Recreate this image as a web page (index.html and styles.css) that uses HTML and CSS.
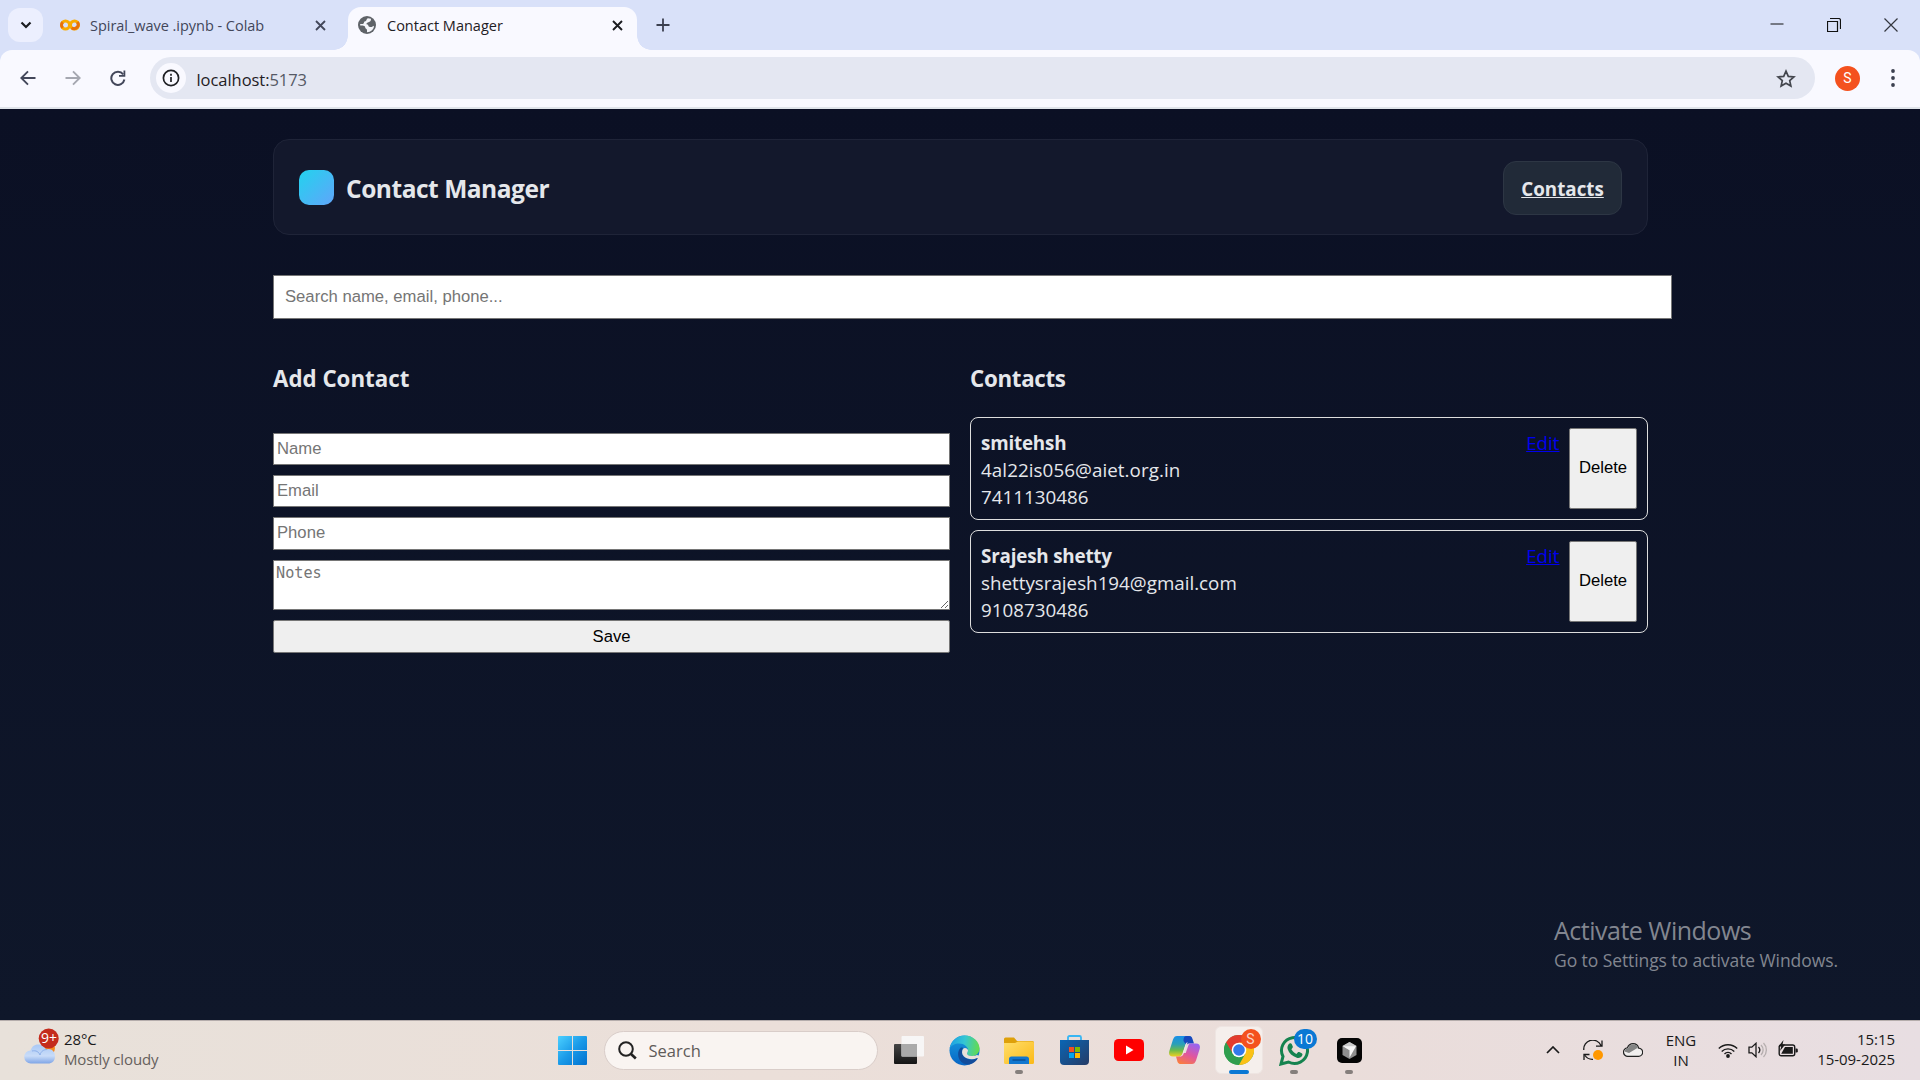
FILE: index.html
```html
<!DOCTYPE html>
<html lang="en">
<head>
<meta charset="utf-8">
<title>Contact Manager</title>
<link rel="stylesheet" href="styles.css">
</head>
<body>
<div class="tabstrip">
  <div class="tab-search"><svg width="12" height="8" viewBox="0 0 12 8"><path d="M1.5 1.5 6 6l4.500-4.500" fill="none" stroke="#1b1c20" stroke-width="2.200"/></svg></div>
  <div class="tab idle">
    <svg class="colab" width="20" height="14" viewBox="0 0 20 14"><circle cx="5.500" cy="7" r="4" fill="none" stroke="#f9ab00" stroke-width="3"/><circle cx="14.500" cy="7" r="4" fill="none" stroke="#f9ab00" stroke-width="3"/><path d="M2.700 4.200A4 4 0 0 0 2.700 9.800M11.700 9.800a4 4 0 0 0 5.600-5.600" fill="none" stroke="#e8710a" stroke-width="3"/></svg>
    <span class="tab-title t-colab">Spiral_wave .ipynb - Colab</span>
    <svg class="close" width="11" height="11" viewBox="0 0 11 11"><path d="M1 1l9 9M10 1l-9 9" stroke="#43475a" stroke-width="1.800"/></svg>
  </div>
  <div class="tab active">
    <svg class="globe" width="18" height="18" viewBox="0 0 18 18"><circle cx="9" cy="9" r="9" fill="#5f6368"/><path d="M10 2.200C8 3 9 5 7 5.300 5.500 5.500 6.500 7.500 5 8H2.200v1.500c2 0 5 0 5 2 0 1.500 1.800 1 1.800 2.500v2.200c4 0 7-3 7-6.500-1.500.5-2 1.800-4 1.300-2.500-.5-1-2.500-3-2.500-1.500-1 .5-2 2-2.500s2-1.500 2-3.300z" fill="#f4f5fa"/></svg>
    <span class="tab-title t-cm">Contact Manager</span>
    <svg class="close" width="11" height="11" viewBox="0 0 11 11"><path d="M1 1l9 9M10 1l-9 9" stroke="#1b1c20" stroke-width="1.900"/></svg>
  </div>
  <svg class="plus" width="14" height="14" viewBox="0 0 14 14"><path d="M7 .5v13M.5 7h13" stroke="#3c4050" stroke-width="1.800"/></svg>
  <div class="win-controls">
    <svg width="14" height="14" viewBox="0 0 14 14"><path d="M.5 6h13" stroke="#111"/></svg>
    <svg width="14" height="14" viewBox="0 0 14 14"><path d="M.5 3.500h10v10H.5zM3 .5h8.500a2 2 0 0 1 2 2V11" fill="none" stroke="#111" stroke-width="1.200"/></svg>
    <svg width="14" height="14" viewBox="0 0 14 14"><path d="M.5.5l13 13M13.500.5l-13 13" stroke="#33363f" stroke-width="1.200"/></svg>
  </div>
</div>
<div class="toolbar">
  <svg class="nav-ic" width="16" height="16" viewBox="0 0 16 16"><path d="M15.500 8H1.500M8 1.300 1.300 8 8 14.700" fill="none" stroke="#43475a" stroke-width="1.900"/></svg>
  <svg class="nav-ic" width="16" height="16" viewBox="0 0 16 16"><path d="M.5 8h14M8 1.300 14.700 8 8 14.700" fill="none" stroke="#a5a7b0" stroke-width="1.900"/></svg>
  <svg class="nav-ic" width="16" height="16" viewBox="0 0 16 16"><path d="M13.200 4.300A6.600 6.600 0 1 0 14.400 9.500" fill="none" stroke="#43475a" stroke-width="2"/><path d="M15.300.5v6.300H9V5h4.500V.5z" fill="#43475a"/></svg>
  <div class="omnibox">
    <span class="info"><svg width="18" height="18" viewBox="0 0 18 18"><circle cx="9" cy="9" r="7.600" fill="none" stroke="#1f2024" stroke-width="1.700"/><path d="M9 8v5M9 4.800v1.900" stroke="#1f2024" stroke-width="1.700"/></svg></span>
    <span class="url">localhost:<i>5173</i></span>
    <svg class="star" width="20" height="19" viewBox="0 0 20 19"><path d="M10 2.200l2.300 5.200 5.600.5-4.200 3.700 1.200 5.500L10 14.200l-4.900 2.900 1.200-5.500L2.100 7.900l5.600-.5z" fill="none" stroke="#43464d" stroke-width="1.700"/></svg>
  </div>
  <span class="avatar">S</span>
  <svg class="menu" width="4" height="18" viewBox="0 0 4 18"><circle cx="2" cy="2" r="1.900" fill="#3c4050"/><circle cx="2" cy="9" r="1.900" fill="#3c4050"/><circle cx="2" cy="16" r="1.900" fill="#3c4050"/></svg>
</div>
<main class="page">
  <header class="app-header">
    <span class="logo"></span>
    <h1>Contact Manager</h1>
    <a class="nav-link" href="#"><span>Contacts</span></a>
  </header>
  <input class="search" placeholder="Search name, email, phone...">
  <div class="columns">
    <section>
      <h2>Add Contact</h2>
      <form class="form">
        <input placeholder="Name">
        <input placeholder="Email">
        <input class="tall" placeholder="Phone">
        <textarea placeholder="Notes"></textarea>
        <button type="button">Save</button>
      </form>
    </section>
    <section>
      <h2 class="h-list">Contacts</h2>
      <div class="list">
        <article class="card">
          <div class="who"><strong>smitehsh</strong><span class="mail-a">4al22is056@aiet.org.in</span><span>7411130486</span></div>
          <a href="#">Edit</a><button type="button">Delete</button>
        </article>
        <article class="card">
          <div class="who"><strong>Srajesh shetty</strong><span>shettysrajesh194@gmail.com</span><span>9108730486</span></div>
          <a href="#">Edit</a><button type="button">Delete</button>
        </article>
      </div>
    </section>
  </div>
  <div class="watermark"><div class="w1">Activate Windows</div><div class="w2">Go to Settings to activate Windows.</div></div>
</main>
<footer class="taskbar">
  <div class="weather">
    <svg width="36" height="38" viewBox="0 0 36 38"><defs><linearGradient id="cl" x2="0" y2="1"><stop offset="0" stop-color="#a9c8f5"/><stop offset=".6" stop-color="#c9dcf8"/><stop offset="1" stop-color="#7fa5e6"/></linearGradient></defs><circle cx="24" cy="20" r="7" fill="#f58a1f"/><path d="M7 35.500a6.500 6.500 0 0 1-.5-13C8 18 11 16.500 14.500 16.500c4 0 6 2 7.500 5 4-2 9 1 9 6.500s-3 7.500-7 7.500z" fill="url(#cl)"/><path d="M8 23c4-1 7 1 8 4 1-4 4-5.500 7-5.500" fill="none" stroke="#8db0ea"/><circle cx="24.700" cy="10.500" r="10" fill="#c42b1c"/></svg>
    <b class="nine">9+</b>
    <div class="wtext"><div class="deg">28°C</div><div class="cloudy">Mostly cloudy</div></div>
  </div>
  <div class="apps">
    <div class="cell"><svg width="29" height="29" viewBox="0 0 29 29"><defs><linearGradient id="wn" gradientUnits="userSpaceOnUse" x1="0" y1="0" x2="29" y2="29"><stop offset="0" stop-color="#4cd0ff"/><stop offset=".5" stop-color="#1a9ae8"/><stop offset="1" stop-color="#0070cf"/></linearGradient></defs><path d="M1 0h13v14H0V1a1 1 0 0 1 1-1zM15 0h13a1 1 0 0 1 1 1v13H15zM0 15h14v14H1a1 1 0 0 1-1-1zM15 15h14v13a1 1 0 0 1-1 1H15z" fill="url(#wn)"/></svg></div>
    <div class="tsearch"><svg width="19" height="19" viewBox="0 0 19 19"><circle cx="8" cy="8" r="6.800" fill="none" stroke="#222" stroke-width="2"/><path d="M12.500 12.500l5.300 5" stroke="#222" stroke-width="2.600"/></svg><span>Search</span></div>
    <div class="cell"><svg width="30" height="28" viewBox="0 0 30 28"><defs><linearGradient id="tv" x2="0" y2="1"><stop offset="0" stop-color="#454545"/><stop offset="1" stop-color="#151515"/></linearGradient></defs><rect y="8" width="23" height="20" rx="1" fill="url(#tv)"/><rect x="7.500" width="22.500" height="20.500" rx="1" fill="#f7f7f7" opacity=".93"/><path d="M7.500 8H23v12.500H7.500z" fill="#aaa"/></svg></div>
    <div class="cell"><svg width="31" height="31" viewBox="0 0 31 31"><defs><linearGradient id="e1" x1="0" y1=".3" x2="1" y2=".4"><stop offset="0" stop-color="#1c9fe4"/><stop offset=".5" stop-color="#35c6d3"/><stop offset="1" stop-color="#63db4f"/></linearGradient><linearGradient id="e2" x2="0" y2="1"><stop offset="0" stop-color="#189cdf"/><stop offset="1" stop-color="#0865c4"/></linearGradient></defs><circle cx="15.500" cy="15.500" r="15" fill="url(#e2)"/><path d="M.6 13.500C2 5.500 8.500.5 15.500.5c9 0 15 6.500 15 13 0 5-4 7.500-7.500 7.500-3.500 0-5-1.500-5-2.500 0-.8 1-1.500 1-3.500 0-3-3.500-6.500-9-6.500-4 0-8 2-9.400 5z" fill="url(#e1)"/><path d="M11.500 13c-4 4-3 12 3 15.500 5.500 3 11.500-.5 14-4.700.3-.7-.3-1-1-.6-6 3-13.500.3-14.300-5-.3-2 .3-4 .8-5.200-.8-.6-1.700-.6-2.500 0z" fill="#124c9b"/><path d="M14 14c-1.500 2-1.300 5.500 1 7.500 3.500 3 9 3.500 13 1.500l1.200.1 1.800-2-3-1c-1 .6-3 1-5 .9-3.500 0-5-1.500-5-2.500 0-.8 1-1.500 1-3.500-1-2-3.500-3-5-1z" fill="#eadfd9"/></svg></div>
    <div class="cell"><svg width="30" height="27" viewBox="0 0 30 27"><defs><linearGradient id="fo" x2="1" y2="1"><stop offset="0" stop-color="#ffde6b"/><stop offset="1" stop-color="#fbb917"/></linearGradient></defs><path d="M0 2a1.500 1.500 0 0 1 1.500-1.500H10L13 4h15.500A1.500 1.500 0 0 1 30 5.500V12H0z" fill="#dea00a"/><path d="M0 6h11l3-1.500h14.500A1.500 1.500 0 0 1 30 6v19.500a1.500 1.500 0 0 1-1.500 1.500h-27A1.500 1.500 0 0 1 0 25.500z" fill="url(#fo)"/><path d="M5 27v-5a2.500 2.500 0 0 1 2.500-2.500h15A2.500 2.500 0 0 1 25 22v5z" fill="#1277cf"/><path d="M8.500 23h13" stroke="#0b4f96" stroke-width="1.500"/></svg><u></u></div>
    <div class="cell"><svg width="29" height="30" viewBox="0 0 29 30"><defs><linearGradient id="st" x2="1" y2="1"><stop offset="0" stop-color="#0a66b5"/><stop offset="1" stop-color="#253b66"/></linearGradient></defs><path d="M8 6V2.500A1.500 1.500 0 0 1 9.500 1h10A1.500 1.500 0 0 1 21 2.500V6" fill="none" stroke="#38b6f3" stroke-width="1.800"/><path d="M0 5h29v21a4 4 0 0 1-4 4H4a4 4 0 0 1-4-4z" fill="url(#st)"/><path d="M9 12h5v5H9z" fill="#f25022"/><path d="M15 12h5v5h-5z" fill="#7fba00"/><path d="M9 18h5v5H9z" fill="#00a4ef"/><path d="M15 18h5v5h-5z" fill="#ffb900"/></svg></div>
    <div class="cell"><svg width="30" height="22" viewBox="0 0 30 22"><rect width="30" height="22" rx="4.500" fill="#f00"/><path d="M12 6.500v9l7.500-4.500z" fill="#fff"/></svg></div>
    <div class="cell"><svg width="31" height="28" viewBox="0 0 31 28"><defs><linearGradient id="c1" x2="0" y2="1"><stop offset="0" stop-color="#1a8fe8"/><stop offset=".4" stop-color="#2a9fb8"/><stop offset=".7" stop-color="#6cbb4a"/><stop offset="1" stop-color="#f0d020"/></linearGradient><linearGradient id="c2" x1=".7" y1="0" x2=".2" y2="1"><stop offset="0" stop-color="#9a63ee"/><stop offset=".5" stop-color="#e0569f"/><stop offset="1" stop-color="#fb7e3c"/></linearGradient></defs><path d="M8 0h12c2 0 2.500 1 3 3l.5 2H20c-2 0-2.800 1-3.300 3l-3 9c-.8 2.500-1.700 3.500-4.200 3.500H4c-4 0-4.500-3-3.500-6L4 3.500C5 1 6 0 8 0z" fill="url(#c1)"/><path d="M17 0h3c2 0 3 1 3.500 3l1.500 4.500h-4c-2 0-3 .5-3.500 2L14.500 5c0-2 .500-5 2.500-5z" fill="#1848bd"/><path d="M23 28H12c-3 0-3.500-2-4-4l-1-3.500h2.500c2.500 0 3.400-1 4.200-3.500h3l3-8.500c.500-1 1.500-1 3-1H27c4 0 4.500 3 3.500 6L27 24.500c-1 2.500-2 3.500-4 3.500z" fill="url(#c2)"/><path d="M16.700 8c.5-1 1-1.500 2-1.700L14.500 18c-.8 2-2 2.500-4 2.500 2-.5 2.500-1.500 3.200-3.500z" fill="#f1e6e4"/></svg></div>
    <div class="cell"><div class="tile"></div><svg width="30" height="30" viewBox="0 0 30 30"><circle cx="15" cy="15" r="15" fill="#34a853"/><path d="M2 7.500A15 15 0 0 1 28 7.500L15 15z" fill="#e33b2e"/><path d="M2 7.500 8.900 18.800 15 15V7.500z" fill="#e33b2e"/><path d="M2 7.500A15 15 0 0 0 15 30l6.300-11.300H8.500z" fill="#2f9e4e"/><path d="M28 7.500A15 15 0 0 1 15 30l6.300-11.300L15 7.500z" fill="#fbc116"/><circle cx="15" cy="15" r="7.300" fill="#fff"/><circle cx="15" cy="15" r="5.800" fill="#3279ea"/></svg><span class="badge orange">S</span><u class="on"></u></div>
    <div class="cell"><svg width="31" height="31" viewBox="0 0 31 31"><path d="M2 29l2-7.500A13 13 0 1 1 9.500 27z" fill="none" stroke="#15834f" stroke-width="3"/><path d="M10.500 8.500c.8-.5 1.800-.3 2.200.6l1.100 2.500c.2.600 0 1-.4 1.500l-1 1.200c1.300 2.300 2.700 3.600 5 4.700l1.300-1.500c.4-.5.900-.6 1.500-.4l2.500 1.200c.8.500.9 1 .6 2-.8 2.300-3.500 3-5.500 2.400-4.500-1.400-7.800-4.500-9.200-8.700-.5-2 .2-4.400 1.900-5.500z" fill="#15834f"/></svg><span class="badge blue">10</span><u></u></div>
    <div class="cell"><svg width="25" height="25" viewBox="0 0 25 25"><rect width="25" height="25" rx="5" fill="#050505"/><path d="M12.500 4l7 4v9l-7 4-7-4V8z" fill="#8e8e8e"/><path d="M12.500 4l7 4-7 4-7-4z" fill="#c9c9c9"/><path d="M6 8.300h13l-6.500 11.500v-7.500z" fill="#f5f5f5"/></svg><u></u></div>
  </div>
  <div class="tray">
    <svg class="i-chev" width="14" height="8" viewBox="0 0 14 8"><path d="M1 7l6-6 6 6" fill="none" stroke="#1a1a1a" stroke-width="1.700"/></svg>
    <svg class="i-sync" width="20" height="20" viewBox="0 0 20 20"><path d="M.8 10A9 9 0 0 1 18 5.500M19 .5v5.700h-6M1 20v-5.500h5.500M2 15.500C4 18.500 7 19.500 10 19.300" fill="none" stroke="#1a1a1a" stroke-width="1.300"/><circle cx="15" cy="15" r="5" fill="#ff9800"/></svg>
    <svg class="i-cloud" width="20" height="14" viewBox="0 0 20 14"><path d="M5 13.300a4.200 4.200 0 0 1-.6-8.400C5.500 2 7.500.7 10 .7c3 0 5 1.800 5.700 4.500a4 4 0 0 1-.2 8.100z" fill="#f1efee" stroke="#222" stroke-width="1.200"/><path d="M1.500 8.500C2 6 3.500 5.500 5 5.300 6 2.500 8 1.300 10 1.300c2.500 0 4.300 1.500 5 3.900-1.500 0-2.500.6-3.500 1.500L6 10z" fill="#848484"/></svg>
    <div class="lang"><div>ENG</div><div>IN</div></div>
    <svg class="i-wifi" width="20" height="15" viewBox="0 0 20 15"><path d="M.8 5.500a13 13 0 0 1 18.400 0M3.700 8.400a9 9 0 0 1 12.600 0M6.500 11a5 5 0 0 1 7 0" fill="none" stroke="#1a1a1a" stroke-width="1.400"/><circle cx="10" cy="13" r="1.900" fill="#1a1a1a"/></svg>
    <svg class="i-snd" width="20" height="16" viewBox="0 0 20 16"><path d="M1 5.200h2.800L8 1.300v13.400l-4.200-3.900H1z" fill="none" stroke="#1a1a1a" stroke-width="1.300"/><path d="M10.500 5a4.500 4.500 0 0 1 0 6" fill="none" stroke="#1a1a1a" stroke-width="1.300"/><path d="M13 3a7 7 0 0 1 0 10M15.500 1a10 10 0 0 1 0 14" fill="none" stroke="#b5aeae" stroke-width="1.300"/></svg>
    <svg class="i-bat" width="20" height="17" viewBox="0 0 20 17"><rect x="1.200" y="5" width="15.500" height="10.800" rx="2" fill="none" stroke="#1a1a1a" stroke-width="1.400"/><path d="M17.500 8.500h1a1.300 1.300 0 0 1 1.300 1.300v1.400a1.300 1.300 0 0 1-1.300 1.300h-1z" fill="#1a1a1a"/><path d="M7 7h7.800v6.700H3.200z" fill="#1a1a1a"/><path d="M5.500 0 .5 6.500h2.700L2 11l5.200-6.500H4.500z" fill="#1a1a1a"/></svg>
    <div class="clock"><div class="tm">15:15</div><div class="dt">15-09-2025</div></div>
  </div>
</footer>
</body>
</html>
```
FILE: styles.css
```css
* { box-sizing: border-box; }
body { margin: 0; width: 1920px; height: 1080px; overflow: hidden; display: flex; flex-direction: column; font-family: "Open Sans", "Noto Sans", sans-serif; background: #d9e1f9; }
svg { display: block; flex: none; }
h1, h2 { margin: 0; }

/* Browser tabs */
.tabstrip { height: 50px; display: flex; align-items: flex-start; padding: 7px 22px 0 8px; background: #d9e1f9; }
.tab-search { width: 35px; height: 34px; margin-top: 1px; border-radius: 12px; background: #eceffe; display: grid; place-items: center; }
.tab { height: 43px; display: flex; align-items: center; padding-bottom: 7px; color: #42465a; position: relative; }
.tab.idle { width: 305px; padding-left: 17px; }
.tab.active { width: 289px; padding-left: 10px; background: #f9f9ff; border-radius: 13px 13px 0 0; color: #1f2024; }
.tab.active::before, .tab.active::after { content: ""; position: absolute; bottom: 0; width: 14px; height: 14px; }
.tab.active::before { left: -14px; background: radial-gradient(circle at 0 0, transparent 13.500px, #f9f9ff 14px); }
.tab.active::after { right: -14px; background: radial-gradient(circle at 100% 0, transparent 13.500px, #f9f9ff 14px); }
.tab-title { font-size: 14.500px; white-space: nowrap; margin-left: 10px; }
.t-colab { letter-spacing: -.03px; }
.t-cm { margin-left: 11px; }
.tab .close { margin-left: auto; margin-right: 22px; }
.tab.active .close { margin-right: 14px; }
.plus { margin: 11px 0 0 19px; }
.win-controls { margin-left: auto; display: flex; gap: 43px; margin-top: 10.500px; }

/* Browser toolbar */
.toolbar { height: 59px; display: flex; align-items: center; padding: 0 25px 1px 20px; background: #f9f9ff; border-bottom: 2px solid #e0e4ea; border-radius: 12px 12px 0 0; }
.nav-ic { margin-right: 29px; }
.nav-ic:nth-child(3) { margin-right: 24px; }
.omnibox { width: 1665px; height: 42px; border-radius: 21px; background: #e4e7f2; display: flex; align-items: center; padding: 0 19px 0 6px; }
.info { width: 30px; height: 30px; border-radius: 50%; background: #f9f9ff; display: grid; place-items: center; }
.url { margin-left: 10.500px; padding-top: 2px; font-size: 16.500px; color: #1f2024; letter-spacing: -.05px; }
.url i { font-style: normal; color: #555965; }
.star { margin-left: auto; }
.avatar { width: 25px; height: 25px; border-radius: 50%; background: #f4511e; color: #fff; font: 14px/25px Roboto, sans-serif; text-align: center; margin-left: 20px; }
.menu { margin-left: auto; }

/* Contact manager page */
.page { height: 911px; padding: 30px 272px 0 273px; background: linear-gradient(#0b1024, #0f172a); color: #e5e7eb; font-size: 18.800px; position: relative; }
.app-header { height: 96px; border: 1px solid #1f2438; border-radius: 16px; background: #13182c; display: flex; align-items: center; padding: 1px 25px 0; }
.logo { width: 35px; height: 35px; border-radius: 10px; background: linear-gradient(135deg, #22d3ee, #60a5fa); }
h1 { font-size: 24.500px; line-height: 36px; margin-left: 12px; padding-top: 3px; letter-spacing: -.47px; }
.nav-link { margin-left: auto; width: 119px; height: 54px; border: 1px solid #2d3644; border-radius: 13px; background: #212a38; color: #e5e7eb; font-weight: 700; display: grid; place-items: center; padding-top: 3px; }
input, textarea, button { font: 16.667px "Liberation Sans", sans-serif; margin: 0; border-radius: 0; }
input, textarea { display: block; background: #fff; border: 1px solid #767676; }
::placeholder { color: #757575; }
.search { width: 1399px; height: 44px; margin-top: 40px; padding: 0 11px; }
.columns { display: grid; grid-template-columns: 677px 678px; gap: 20px; margin-top: 41px; }
h2 { font-size: 22.300px; line-height: 38px; }
.h-list { letter-spacing: -.3px; }
.form { display: grid; gap: 10px; margin-top: 35px; }
.form input { width: 100%; height: 32px; padding: 0 3px; }
.form .tall { height: 33px; padding-bottom: 2px; }
textarea { height: 50px; width: 100%; padding: 2px; font: 15.200px/20px "DejaVu Sans Mono", monospace; }
.form button { height: 33px; }
button { background: #efefef; border: 1px solid #767676; border-radius: 2px; color: #000; padding: 0; }
.list { display: grid; gap: 10px; margin-top: 19px; }
.card { height: 103px; border: 1px solid #ddd; border-radius: 8px; padding: 10px; display: flex; line-height: 27px; }
.who { display: flex; flex-direction: column; flex: 1; padding-top: 2px; }
.who strong { letter-spacing: -.18px; }
.mail-a { letter-spacing: .07px; }
.card a { color: #00e; margin: 2px 9.500px 0 0; }
.card button { width: 68px; padding-bottom: 2px; }
.watermark { position: absolute; left: 1554px; top: 803px; color: #828690; white-space: nowrap; }
.w1 { font-size: 25px; line-height: 37px; letter-spacing: -.5px; }
.w2 { font-size: 17.500px; line-height: 23px; letter-spacing: -.08px; }

/* Taskbar */
.taskbar { height: 60px; border-top: 1px solid #b5adac; background: linear-gradient(90deg, #e8e1da, #ebdfd9 40%, #eaddda 70%, #e8dee2); display: flex; align-items: center; color: #1a1a1a; font-size: 15px; position: relative; }
.weather { width: 545px; display: flex; padding-left: 24px; position: relative; line-height: 20px; margin-top: -4px; }
.nine { position: absolute; left: 41px; top: 0; color: #fff; font-weight: 400; font-size: 14px; }
.wtext { margin-left: 4px; padding-top: 1px; letter-spacing: -.13px; }
.cloudy { color: #66605d; }
.apps { display: flex; align-items: center; height: 59px; }
.cell { width: 55px; height: 59px; display: grid; place-items: center; position: relative; padding-bottom: 1px; }
.cell svg { position: relative; }
.cell u { position: absolute; left: 23.500px; bottom: 6px; width: 8px; height: 4px; border-radius: 2px; background: #857f7c; }
.cell u.on { width: 20px; left: 17.500px; background: #0a78d4; }
.tile { position: absolute; left: 3.500px; top: 5px; width: 48px; height: 48px; border-radius: 6px; background: #f5efec; border: 1px solid #eee5e2; }
.badge { position: absolute; border-radius: 50%; color: #fff; text-align: center; top: 8px; left: 29px; width: 20px; height: 20px; font: 14px/20px Roboto, sans-serif; }
.orange { background: #f4511e; color: #fbd5c9; }
.blue { background: #0a78d4; width: 23px; left: 27px; border-radius: 10px; font-family: "Open Sans", sans-serif; }
.tsearch { width: 274px; height: 39px; border-radius: 20px; background: #f9f4f1; border: 1px solid #d9cdc9; display: flex; align-items: center; padding-left: 13px; margin: 0 4px 0 3.500px; font-size: 16.500px; color: #5f5b59; }
.tsearch span { margin-left: 12px; }
.tray { flex: 1; display: flex; align-items: center; padding: 0 25px 1px 0; line-height: 20px; }
.i-chev { margin-left: 169.500px; }
.i-sync { margin-left: 23px; }
.i-cloud { margin-left: 20px; }
.lang { width: 40px; margin: -1px 0 0 18px; text-align: center; }
.i-wifi { margin-left: 17px; }
.i-snd, .i-bat { margin-left: 10px; }
.i-bat { margin-top: -3px; }
.clock { margin-left: auto; text-align: right; white-space: nowrap; margin-top: -3px; letter-spacing: -.05px; }
```
